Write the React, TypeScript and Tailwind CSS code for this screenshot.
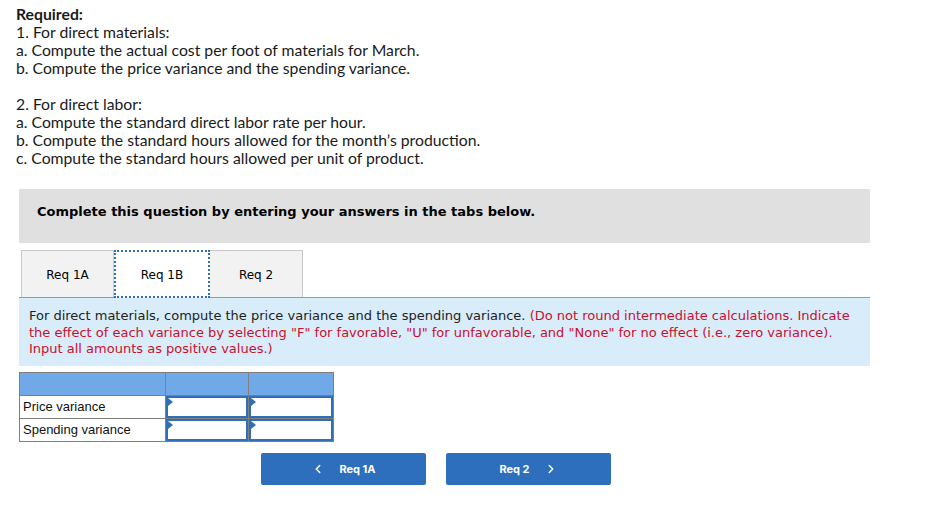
import { ChevronLeft, ChevronRight } from "lucide-react";

const required = [
  { text: "Required:", bold: true },
  { text: "1. For direct materials:" },
  { text: "a. Compute the actual cost per foot of materials for March." },
  { text: "b. Compute the price variance and the spending variance." },
  { text: "" },
  { text: "2. For direct labor:" },
  { text: "a. Compute the standard direct labor rate per hour." },
  { text: "b. Compute the standard hours allowed for the month\u2019s production." },
  { text: "c. Compute the standard hours allowed per unit of product." },
];

const rows = ["Price variance", "Spending variance"];

function InputCell() {
  return (
    <td className="border border-[#7f7f7f] p-0">
      <div className="relative h-[22px] border-2 border-[#2f6fba] bg-white">
        <span className="absolute left-0 top-0 h-0 w-0 border-y-[4px] border-l-[5px] border-y-transparent border-l-[#2f6fba]" />
      </div>
    </td>
  );
}

export default function App() {
  return (
    <div className="min-h-[524px] w-[942px] bg-white pt-[5px] text-[#1a1a1a]">
      <div className="pl-4 font-['Lato',sans-serif] text-[15.75px] leading-[18px]">
        {required.map((line, i) =>
          line.text ? (
            <p key={i} className={line.bold ? "font-bold" : ""}>
              {line.text}
            </p>
          ) : (
            <div key={i} className="h-[18px]" />
          )
        )}
      </div>

      <div className="ml-[19px] mt-[22px] w-[851px] font-['DejaVu_Sans',Verdana,sans-serif]">
        <div className="h-[54px] bg-[#e0e0e0] pl-[18px] pt-[13px] text-[13px] font-bold text-black">
          Complete this question by entering your answers in the tabs below.
        </div>

        <div className="mt-[7px] flex border-b border-[#9a9a9a] pl-[2px] text-[12px] text-black">
          <div className="flex h-[47px] w-[93px] items-center justify-center border border-b-0 border-[#c8c8c8] bg-[#f2f2f2] pt-[2px]">
            Req 1A
          </div>
          <div className="-mb-px flex h-[48px] w-[96px] items-center justify-center border-2 border-dotted border-[#2f6fba] bg-white pt-[2px]">
            Req 1B
          </div>
          <div className="flex h-[47px] w-[93px] items-center justify-center border border-b-0 border-l-0 border-[#c8c8c8] bg-[#f2f2f2] pt-[2px]">
            Req 2
          </div>
        </div>

        <div className="h-[68px] bg-[#d9ecf9] px-[10px] pt-[10px] text-[13px] leading-[16.5px] text-[#222]">
          For direct materials, compute the price variance and the spending variance.{" "}
          <span className="text-[#c8102e]">
            (Do not round intermediate calculations. Indicate the effect of each variance by selecting "F" for
            favorable, "U" for unfavorable, and "None" for no effect (i.e., zero variance). Input all amounts as
            positive values.)
          </span>
        </div>

        <table className="mt-[6px] border-collapse font-['Liberation_Sans',Arial,sans-serif] text-[13px] text-[#111]">
          <tbody>
            <tr className="h-[23px] bg-[#70a8e8]">
              <td className="w-[146px] border border-[#7f7f7f]" />
              <td className="w-[83px] border border-[#7f7f7f]" />
              <td className="w-[85px] border border-[#7f7f7f]" />
            </tr>
            {rows.map((r) => (
              <tr key={r} className="h-[23px]">
                <td className="border border-[#7f7f7f] px-[3px]">{r}</td>
                <InputCell />
                <InputCell />
              </tr>
            ))}
          </tbody>
        </table>

        <div className="mt-[11px] flex gap-[20px] pl-[242px] font-['Inter',sans-serif] text-[11px] font-bold text-white">
          <button className="flex h-[32px] w-[165px] items-center justify-center gap-[14px] rounded-[2px] bg-[#2d6fbd]">
            <ChevronLeft size={14} strokeWidth={2.5} />
            <span>Req 1A</span>
          </button>
          <button className="flex h-[32px] w-[165px] items-center justify-center gap-[14px] rounded-[2px] bg-[#2d6fbd]">
            <span>Req 2</span>
            <ChevronRight size={14} strokeWidth={2.5} />
          </button>
        </div>
      </div>
    </div>
  );
}
